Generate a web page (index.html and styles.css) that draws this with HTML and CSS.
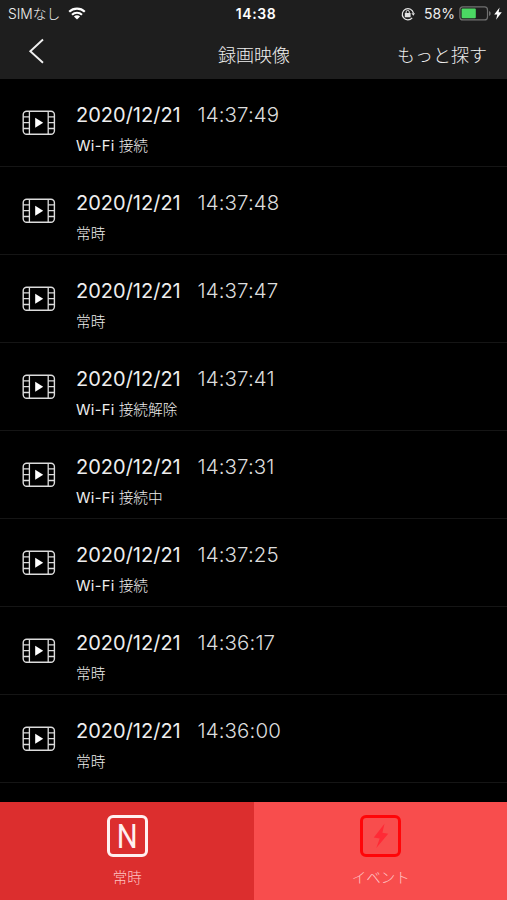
FILE: index.html
```html
<!DOCTYPE html>
<html lang="ja">
<head>
    <meta charset="UTF-8">
    <meta name="viewport" content="width=device-width, initial-scale=1.0">
    <title>録画映像</title>
    <link rel="stylesheet" href="styles.css">
</head>
<body>

    <!-- Shared film icon -->
    <svg class="defs" width="0" height="0">
        <symbol id="film" viewBox="0 0 34 26">
            <rect x="1.2" y="1.2" width="31.2" height="23" rx="3.5" fill="none" stroke="#dcdcdc" stroke-width="1.4"/>
            <path d="M7.4 1v23M26.2 1v23M1 6.9h6.4M1 12.7h6.4M1 18.5h6.4M26.2 6.9h6.4M26.2 12.7h6.4M26.2 18.5h6.4" fill="none" stroke="#dcdcdc" stroke-width="1.3"/>
            <path d="M13.2 7.8v10l8-5z" fill="#fff"/>
        </symbol>
    </svg>

    <div class="app">
        <header class="header">
            <!-- Status bar -->
            <div class="status">
                <div class="status-left">
                    <span class="carrier">SIMなし</span>
                    <svg class="wifi" width="18" height="13" viewBox="0 0 18 13">
                        <path d="M1.2 4.8a11.2 11.2 0 0 1 15.6 0M4 7.7a7.2 7.2 0 0 1 10 0" fill="none" stroke="#fff" stroke-width="2.1"/>
                        <path d="M9 12.6L5.9 9.6a4.5 4.5 0 0 1 6.2 0z" fill="#fff"/>
                    </svg>
                </div>
                <div class="clock">14:38</div>
                <div class="status-right">
                    <svg class="lock" width="14" height="14" viewBox="0 0 14 14">
                        <path d="M11.2 10.8A5.6 5.6 0 1 1 12.4 6.2" fill="none" stroke="#e4e4e4" stroke-width="1.2"/>
                        <path d="M10.4 6.2h3.6l-1.6 2.6z" fill="#e4e4e4"/>
                        <rect x="3.8" y="5.9" width="5.8" height="4.3" rx=".5" fill="#e4e4e4"/>
                        <path d="M5.1 6.5V5a1.6 1.6 0 0 1 3.2 0v1.5" fill="none" stroke="#e4e4e4" stroke-width="1"/>
                    </svg>
                    <span class="percent">58%</span>
                    <svg class="battery" width="32" height="15" viewBox="0 0 32 15">
                        <rect x=".9" y=".9" width="27.6" height="13" rx="3" fill="none" stroke="#707070" stroke-width="1.2"/>
                        <rect x="2.6" y="2.6" width="14.2" height="9.6" rx="1" fill="#4bd863"/>
                        <path d="M30 5v5c1.2-.4 1.7-1.3 1.7-2.5S31.2 5.4 30 5z" fill="#707070"/>
                    </svg>
                    <svg class="bolt" width="8" height="13" viewBox="0 0 8 13">
                        <path d="M5.6.4L.2 7.5h3.1l-1.2 5.2 5.7-7.5H4.6z" fill="#fff"/>
                    </svg>
                </div>
            </div>

            <!-- Navigation -->
            <div class="nav">
                <a class="back">
                    <svg width="17" height="26" viewBox="0 0 17 26">
                        <path d="M15 1.5L2.3 13.2L15 24.7" fill="none" stroke="#f0f0f0" stroke-width="1.9"/>
                    </svg>
                </a>
                <h1>録画映像</h1>
                <a class="more">もっと探す</a>
            </div>
        </header>

        <!-- Recordings -->
        <ul class="list">
            <li class="item">
                <svg class="film"><use href="#film"/></svg>
                <div>
                    <p class="when"><span class="date">2020/12/21</span><span class="time">14:37:49</span></p>
                    <p class="type"><span class="wf">Wi-Fi</span> 接続</p>
                </div>
            </li>
            <li class="item">
                <svg class="film"><use href="#film"/></svg>
                <div>
                    <p class="when"><span class="date">2020/12/21</span><span class="time">14:37:48</span></p>
                    <p class="type">常時</p>
                </div>
            </li>
            <li class="item">
                <svg class="film"><use href="#film"/></svg>
                <div>
                    <p class="when"><span class="date">2020/12/21</span><span class="time">14:37:47</span></p>
                    <p class="type">常時</p>
                </div>
            </li>
            <li class="item">
                <svg class="film"><use href="#film"/></svg>
                <div>
                    <p class="when"><span class="date">2020/12/21</span><span class="time">14:37:41</span></p>
                    <p class="type"><span class="wf">Wi-Fi</span> 接続解除</p>
                </div>
            </li>
            <li class="item">
                <svg class="film"><use href="#film"/></svg>
                <div>
                    <p class="when"><span class="date">2020/12/21</span><span class="time">14:37:31</span></p>
                    <p class="type"><span class="wf">Wi-Fi</span> 接続中</p>
                </div>
            </li>
            <li class="item">
                <svg class="film"><use href="#film"/></svg>
                <div>
                    <p class="when"><span class="date">2020/12/21</span><span class="time">14:37:25</span></p>
                    <p class="type"><span class="wf">Wi-Fi</span> 接続</p>
                </div>
            </li>
            <li class="item">
                <svg class="film"><use href="#film"/></svg>
                <div>
                    <p class="when"><span class="date">2020/12/21</span><span class="time">14:36:17</span></p>
                    <p class="type">常時</p>
                </div>
            </li>
            <li class="item">
                <svg class="film"><use href="#film"/></svg>
                <div>
                    <p class="when"><span class="date">2020/12/21</span><span class="time">14:36:00</span></p>
                    <p class="type">常時</p>
                </div>
            </li>
        </ul>

        <!-- Bottom tabs -->
        <nav class="tabs">
            <a class="tab active">
                <span class="tab-icon"><span class="letter">N</span></span>
                <span class="tab-label">常時</span>
            </a>
            <a class="tab">
                <span class="tab-icon event">
                    <svg width="16" height="26" viewBox="0 0 16 26">
                        <path d="M11.5.8L.8 14.4l5.9 1.2L3.3 25l11.9-14.2-5.8-1z" fill="#ff2a36"/>
                    </svg>
                </span>
                <span class="tab-label">イベント</span>
            </a>
        </nav>
    </div>

</body>
</html>
```

FILE: styles.css
```css
* {
    box-sizing: border-box;
}
body {
    margin: 0;
    background-color: #000;
    color: #eee;
    font-family: Inter, "Noto Sans CJK JP", sans-serif;
}
svg {
    display: block;
}
.defs {
    display: none;
}
.app {
    display: flex;
    flex-direction: column;
    height: 900px;
    overflow: hidden;
}

/* Header */
.header {
    height: 79px;
    background-color: #1e1e1e;
}
.status {
    display: grid;
    grid-template-columns: 1fr auto 1fr;
    align-items: center;
    height: 27px;
    padding: 0 5px 0 8px;
    font-size: 14px;
    line-height: 26px;
}
.status-left, .status-right {
    display: flex;
    align-items: center;
}
.carrier {
    width: 53px;
    padding-top: 2px;
    font-size: 13.8px;
    font-weight: 300;
    line-height: 25px;
    white-space: nowrap;
}
.wifi {
    margin-left: 7px;
}
.clock {
    padding-left: 2px;
    color: #fff;
    font-weight: 600;
    letter-spacing: 0.6px;
}
.status-right {
    justify-content: flex-end;
}
.percent {
    margin: 0 4px 0 9px;
}
.bolt {
    margin-left: 3px;
}
.nav {
    display: grid;
    grid-template-columns: 190px auto 1fr;
    align-items: center;
    height: 52px;
    padding: 0 20px 0 28px;
}
.nav h1 {
    margin: 6px 0 0;
    font-size: 18px;
    font-weight: 300;
    line-height: 26px;
}
.back {
    margin-top: -5px;
}
.more {
    margin-top: 6px;
    font-size: 18px;
    font-weight: 300;
    line-height: 26px;
    text-align: right;
}

/* Recordings */
.list {
    flex: 1;
    margin: 0;
    padding: 0;
    list-style: none;
}
.item {
    display: flex;
    height: 88px;
    padding: 23px 0 0 22px;
    border-bottom: 1px solid #151515;
}
.film {
    width: 34px;
    height: 26px;
    margin: 8px 20px 0 0;
}
.item p {
    margin: 0;
    white-space: nowrap;
}
.when {
    display: flex;
    font-size: 20px;
    line-height: 27px;
}
.date {
    width: 121.5px;
}
.time {
    color: #ddd;
    font-size: 20.5px;
    font-weight: 300;
    line-height: 26px;
    letter-spacing: 0.1px;
}
.type {
    padding-top: 5px;
    font-size: 14.7px;
    font-weight: 300;
    line-height: 24px;
}
.wf {
    font-weight: 400;
    letter-spacing: 0.3px;
}

/* Bottom tabs */
.tabs {
    display: flex;
    height: 98px;
}
.tab {
    display: flex;
    flex: 1;
    flex-direction: column;
    align-items: center;
    padding: 13px 0 0 1px;
    background-color: #f84d4d;
    color: #ffc4c4;
}
.tab.active {
    background-color: #dc2e2e;
}
.tab-icon {
    display: flex;
    align-items: center;
    justify-content: center;
    width: 41px;
    height: 42px;
    border: 3px solid #fff0f0;
    border-radius: 6px;
    color: #fff0f0;
}
.letter {
    font-family: Roboto, sans-serif;
    font-size: 34px;
    line-height: 36px;
    transform: scaleX(0.86);
}
.tab-icon.event {
    border-color: #ff0508;
}
.tab-label {
    margin-top: 9px;
    font-size: 14.5px;
    font-weight: 300;
    line-height: 24px;
}
```
